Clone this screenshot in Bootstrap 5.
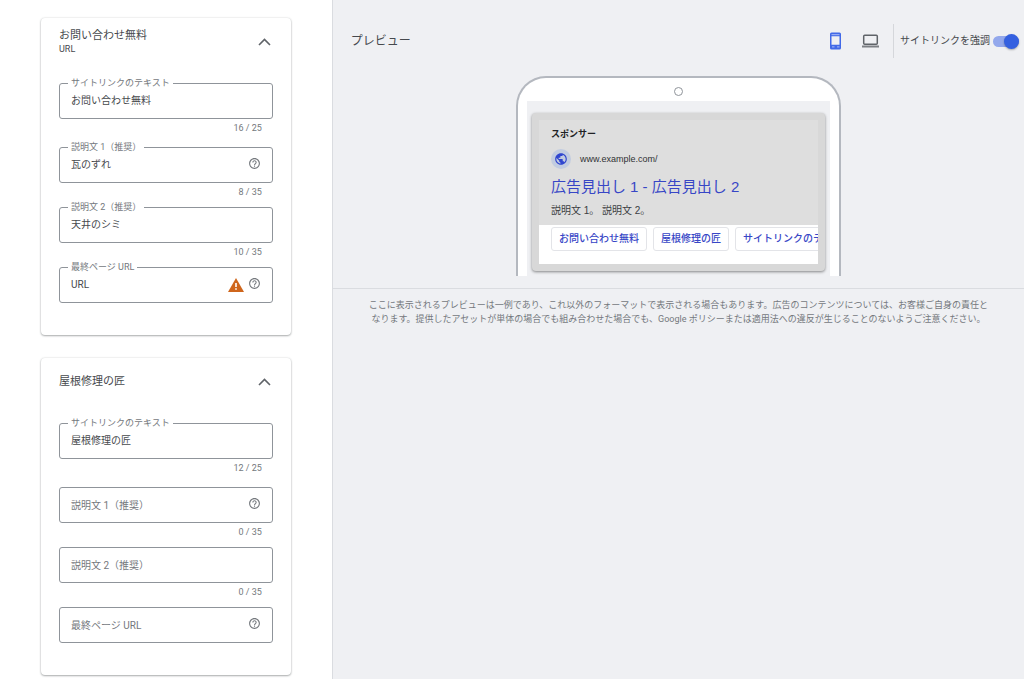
<!DOCTYPE html>
<html lang="ja">
<head>
<meta charset="utf-8">
<meta name="viewport" content="width=device-width, initial-scale=1">
<title>サイトリンク</title>
<link href="https://cdn.jsdelivr.net/npm/bootstrap@5.3.0/dist/css/bootstrap.min.css" rel="stylesheet">
<style>
  body { font-family: Roboto, "Noto Sans CJK JP", sans-serif; font-size: 10px; line-height: 14px; color: #46494d; background: #eff0f3; }
  .editor { flex: 0 0 32.5%; padding: 18px 41px 4px; border-right: 1px solid #dadce0; }
  .asset { border: 0; border-radius: 4px; padding: 0 18px 32px; color: #46494d; box-shadow: 0 1px 2px rgba(60,64,67,.4), 0 0 2px rgba(60,64,67,.2); }
  .asset + .asset { margin-top: 23px; }
  .asset-head { height: 65px; padding-bottom: 17px; }
  .asset-title { font-size: 11px; line-height: 14px; margin: 0; font-weight: 400; }
  .asset-sub { font-size: 9px; line-height: 12px; }
  .toggle-btn { color: #5f6368; line-height: 0; }
  .field { position: relative; height: 36px; border: 1px solid #8f949a; border-radius: 3px; padding: 0 11px; }
  .field input { min-width: 0; flex: 1 1 0; border: 0; outline: 0; padding: 0; background: transparent; color: #46494d; font-size: 10px; line-height: 16px; }
  .field label { position: absolute; left: 8px; top: -8px; padding: 0 3px; background: #fff; color: #74787d; font-size: 9px; line-height: 14px; white-space: nowrap; }
  .field label.resting { top: 11px; font-size: 10px; background: transparent; pointer-events: none; }
  .counter { height: 24px; padding: 2px 11px 0; text-align: right; color: #74787d; font-size: 9px; line-height: 14px; }
  .counter.first { height: 28px; }
  .help { color: #74787d; margin-bottom: 4px; }
  .preview-head { height: 76px; padding: 24px 5px 18px 18px; }
  .preview-title { font-size: 12px; line-height: 16px; margin: 0; font-weight: 400; }
  .device-btn { line-height: 0; }
  .phone-btn { color: #4169e8; margin-right: 20px; }
  .laptop-btn { color: #5f6368; margin-right: 14px; }
  .emphasis { height: 34px; border-left: 1px solid #d5d7db; padding-left: 6px; gap: 3px; }
  .emphasis .form-check-input { position: relative; width: 26px; height: 11px; margin: 0; border: 0; border-radius: 6px; background: #93a8ec; box-shadow: none; }
  .emphasis .form-check-input::before { content: ""; position: absolute; right: 0; top: -2px; width: 15px; height: 15px; border-radius: 50%; background: #3460e0; box-shadow: 0 1px 2px rgba(0,0,0,.3); }
  .phone { width: 325px; border: solid #b4b8bf; border-width: 2px 2px 0; border-radius: 30px 30px 0 0; background: #fff; padding: 0 9px; }
  .camera { width: 9px; height: 9px; border: 1px solid #8f949a; border-radius: 50%; margin: 9px auto 5px; }
  .screen { background: #eff0f3; padding: 12px 5px 5px; }
  .ad { background: #d8d8d8; border-radius: 4px; padding: 7px; box-shadow: 0 1px 3px rgba(0,0,0,.45); font-family: "Liberation Sans", "Noto Sans CJK JP", sans-serif; }
  .ad-main { background: #dedede; height: 105px; padding: 7px 12px 0; }
  .sponsor { font-size: 9px; font-weight: 700; color: #202124; }
  .globe { width: 20px; height: 20px; border-radius: 50%; background: #c2cce0; }
  .ad-url { font-size: 9px; margin-left: 9px; color: #303134; }
  .ad-title { font-size: 15px; line-height: 20px; margin: 8px 0 7px; font-weight: 400; }
  .ad-title a, .chip { color: #3746c6; text-decoration: none; }
  .ad-text { font-size: 10px; color: #3c4043; }
  .chips { background: #fff; height: 39px; padding: 2px 0 0 12px; gap: 6px; overflow: hidden; }
  .chip { flex: none; height: 24px; border: 1px solid #e3e4e8; border-radius: 3px; padding: 4px 7px; font-size: 10px; line-height: 14px; font-weight: 500; }
  .note { border-top: 1px solid #dadce0; margin: 12px 0 0; padding: 9px 12px; text-align: center; color: #74787d; font-size: 9px; line-height: 14px; }
</style>
</head>
<body>
<svg class="d-none" xmlns="http://www.w3.org/2000/svg">
  <symbol id="up" viewBox="0 0 14 14"><path d="M1.500 10 7 4.500 12.500 10" fill="none" stroke="currentColor" stroke-width="1.600"/></symbol>
  <symbol id="help" viewBox="0 0 24 24"><path fill="currentColor" d="M11 18h2v-2h-2v2zm1-16C6.480 2 2 6.480 2 12s4.480 10 10 10 10-4.480 10-10S17.520 2 12 2zm0 18c-4.410 0-8-3.590-8-8s3.590-8 8-8 8 3.590 8 8-3.590 8-8 8zm0-14c-2.210 0-4 1.790-4 4h2c0-1.100.9-2 2-2s2 .9 2 2c0 2-3 1.750-3 5h2c0-2.250 3-2.500 3-5 0-2.210-1.790-4-4-4z"/></symbol>
</svg>
<div class="d-flex min-vh-100">
  <main class="editor bg-white">
    <section class="card asset">
      <div class="asset-head d-flex justify-content-between align-items-center">
        <div><h2 class="asset-title">お問い合わせ無料</h2><div class="asset-sub">URL</div></div>
        <button type="button" class="btn p-0 border-0 toggle-btn" aria-label="閉じる"><svg width="17" height="14"><use href="#up"/></svg></button>
      </div>
      <div class="field d-flex align-items-center"><label for="a1">サイトリンクのテキスト</label><input id="a1" type="text" value="お問い合わせ無料"></div>
      <div class="counter first">16 / 25</div>
      <div class="field d-flex align-items-center"><label for="a2">説明文 1（推奨）</label><input id="a2" type="text" value="瓦のずれ"><svg class="help" width="13" height="13"><use href="#help"/></svg></div>
      <div class="counter">8 / 35</div>
      <div class="field d-flex align-items-center"><label for="a3">説明文 2（推奨）</label><input id="a3" type="text" value="天井のシミ"></div>
      <div class="counter">10 / 35</div>
      <div class="field d-flex align-items-center"><label for="a4">最終ページ URL</label><input id="a4" type="text" value="URL">
        <svg class="me-1" width="16" height="14" viewBox="0 0 16 14"><path d="M8 0 16 14H0z" fill="#cf661c"/><path d="M7.200 5h1.600v4H7.200zM7.200 10.200h1.600v1.600H7.200z" fill="#fff"/></svg>
        <svg class="help" width="13" height="13"><use href="#help"/></svg></div>
    </section>
    <section class="card asset">
      <div class="asset-head d-flex justify-content-between align-items-center">
        <h2 class="asset-title">屋根修理の匠</h2>
        <button type="button" class="btn p-0 border-0 toggle-btn" aria-label="閉じる"><svg width="17" height="14"><use href="#up"/></svg></button>
      </div>
      <div class="field d-flex align-items-center"><label for="b1">サイトリンクのテキスト</label><input id="b1" type="text" value="屋根修理の匠"></div>
      <div class="counter first">12 / 25</div>
      <div class="field d-flex align-items-center"><label class="resting" for="b2">説明文 1（推奨）</label><input id="b2" type="text"><svg class="help" width="13" height="13"><use href="#help"/></svg></div>
      <div class="counter">0 / 35</div>
      <div class="field d-flex align-items-center"><label class="resting" for="b3">説明文 2（推奨）</label><input id="b3" type="text"></div>
      <div class="counter">0 / 35</div>
      <div class="field d-flex align-items-center"><label class="resting" for="b4">最終ページ URL</label><input id="b4" type="text"><svg class="help" width="13" height="13"><use href="#help"/></svg></div>
    </section>
  </main>
  <aside class="flex-grow-1">
    <header class="preview-head d-flex align-items-center">
      <h1 class="preview-title me-auto">プレビュー</h1>
      <button type="button" class="btn p-0 border-0 device-btn phone-btn" aria-label="モバイル"><svg width="13" height="18" viewBox="0 0 13 18"><path fill="currentColor" fill-rule="evenodd" d="M2.500.5h8a1.500 1.500 0 0 1 1.500 1.500v14a1.500 1.500 0 0 1-1.500 1.500h-8A1.500 1.500 0 0 1 1 16V2A1.500 1.500 0 0 1 2.500.5zM2.500 4.300v8.400h8V4.300z"/><path d="M2.500 2.700h8M3 14.900h2.500M8 14.900h2.500" stroke="#c7d2f7" stroke-width=".8"/></svg></button>
      <button type="button" class="btn p-0 border-0 device-btn laptop-btn" aria-label="パソコン"><svg width="17" height="14" viewBox="0 0 17 14"><rect x="1.700" y="1.200" width="13.600" height="9" rx="1" fill="none" stroke="currentColor" stroke-width="1.500"/><path d="M0 11.500h17v2H0z" fill="currentColor" opacity=".8"/></svg></button>
      <div class="emphasis d-flex align-items-center"><label for="emph">サイトリンクを強調</label><input class="form-check-input" type="checkbox" role="switch" id="emph" checked></div>
    </header>
    <div class="phone mx-auto">
      <div class="d-flex"><div class="camera"></div></div>
      <div class="screen">
        <article class="ad">
          <div class="ad-main">
            <div class="sponsor">スポンサー</div>
            <div class="d-flex align-items-center mt-2">
              <span class="globe d-flex align-items-center justify-content-center"><svg width="14" height="14" viewBox="0 0 24 24"><path fill="#3046cf" d="M12 2C6.480 2 2 6.480 2 12s4.480 10 10 10 10-4.480 10-10S17.520 2 12 2zm-1 17.930c-3.950-.49-7-3.850-7-7.930 0-.62.08-1.210.21-1.790L9 15v1c0 1.100.9 2 2 2v1.930zm6.900-2.540c-.26-.81-1-1.390-1.900-1.390h-1v-3c0-.55-.45-1-1-1H8v-2h2c.55 0 1-.45 1-1V7h2c1.100 0 2-.9 2-2v-.41c2.930 1.190 5 4.060 5 7.410 0 2.080-.8 3.970-2.100 5.390z"/></svg></span>
              <span class="ad-url">www.example.com/</span>
            </div>
            <h2 class="ad-title"><a href="#">広告見出し 1 - 広告見出し 2</a></h2>
            <div class="ad-text">説明文 1。 説明文 2。</div>
          </div>
          <div class="chips d-flex"><a class="chip" href="#">お問い合わせ無料</a><a class="chip" href="#">屋根修理の匠</a><a class="chip" href="#">サイトリンクのテ</a></div>
        </article>
      </div>
    </div>
    <p class="note">ここに表示されるプレビューは一例であり、これ以外のフォーマットで表示される場合もあります。広告のコンテンツについては、お客様ご自身の責任と<br>なります。提供したアセットが単体の場合でも組み合わせた場合でも、Google ポリシーまたは適用法への違反が生じることのないようご注意ください。</p>
  </aside>
</div>
<script src="https://cdn.jsdelivr.net/npm/bootstrap@5.3.0/dist/js/bootstrap.bundle.min.js"></script>
</body>
</html>
